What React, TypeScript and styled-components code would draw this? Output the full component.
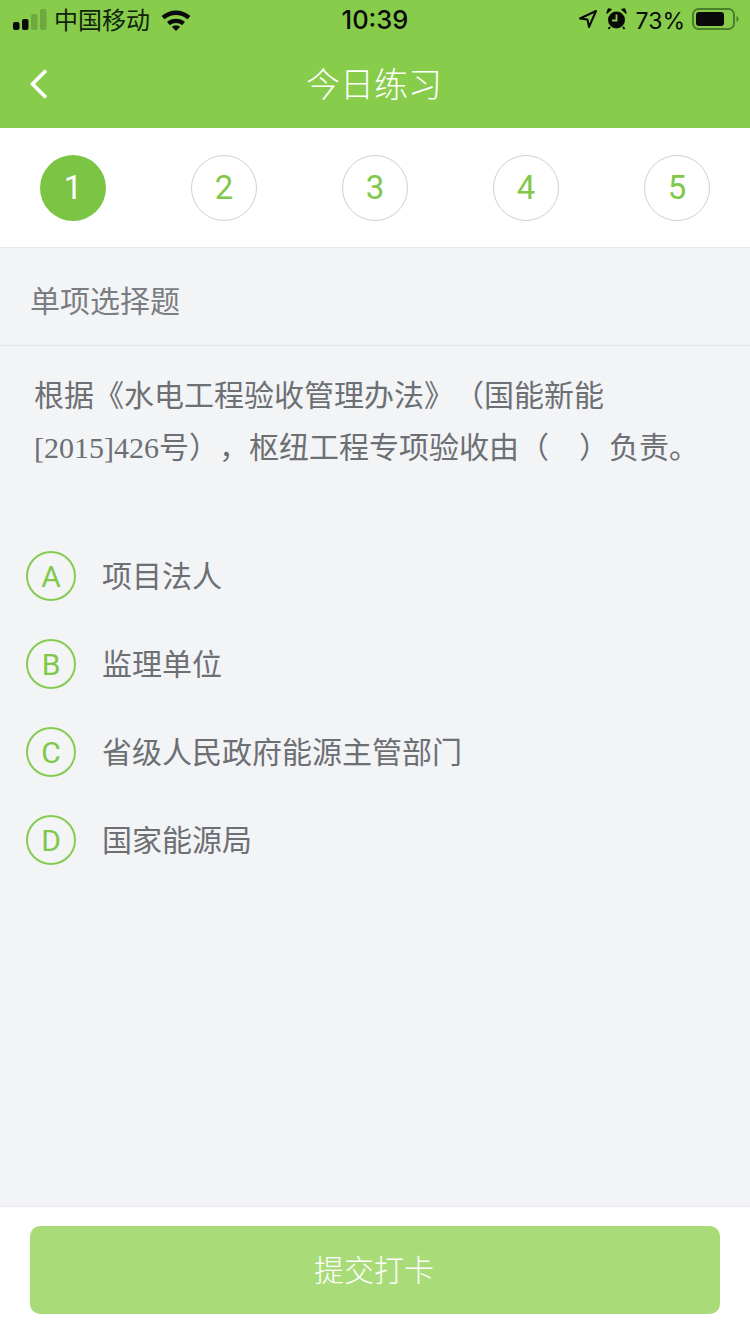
import React from "react";
import styled, { createGlobalStyle } from "styled-components";

const cjk = `"Noto Sans CJK SC", "Noto Sans", sans-serif`;

const Global = createGlobalStyle`
  html, body { margin: 0; padding: 0; }
  body { background: #f3f4f6; font-family: ${cjk}; text-spacing-trim: space-all; }
  * { box-sizing: border-box; }
`;

const Page = styled.div`
  width: 750px;
  height: 1334px;
  display: flex;
  flex-direction: column;
  background: #f3f4f6;
  overflow: hidden;
`;

const Header = styled.header`
  height: 128px;
  background: #87cc4b;
  display: flex;
  flex-direction: column;
`;

const StatusBar = styled.div`
  height: 40px;
  padding: 0 11px 0 13px;
  display: grid;
  grid-template-columns: 1fr auto 1fr;
  align-items: center;
  color: #0a0a0a;
`;

const StatusLeft = styled.div`
  display: flex;
  align-items: center;
`;

const StatusRight = styled.div`
  display: flex;
  align-items: center;
  justify-content: flex-end;
`;

const Carrier = styled.span`
  font-size: 24px;
  line-height: 36px;
  margin-left: 7px;
  padding-bottom: 3px;
  color: #10240a;
`;

const Time = styled.span`
  font-family: Inter, "Liberation Sans", sans-serif;
  font-size: 25.5px;
  font-weight: 500;
  line-height: 40px;
  margin-right: 2px;
`;

const Percent = styled.span`
  font-family: Inter, "Liberation Sans", sans-serif;
  font-size: 23px;
  font-weight: 400;
  line-height: 36px;
  padding-top: 2px;
  margin: 0 7px 0 9px;
`;

const WifiIcon = styled.svg`
  margin-left: 11px;
`;

const LocationIcon = styled.svg`
  margin-bottom: 2px;
`;

const AlarmIcon = styled.svg`
  margin: 0 0 2px 8px;
`;

const BatteryIcon = styled.svg`
  margin-bottom: 2px;
`;

const Nav = styled.div`
  flex: 1;
  position: relative;
  display: flex;
  align-items: center;
  justify-content: center;
`;

const BackIcon = styled.svg`
  position: absolute;
  left: 29px;
  top: 28px;
`;

const Title = styled.h1`
  margin: 0 2px 0 0;
  font-size: 34px;
  font-weight: 300;
  color: #fff;
  line-height: 88px;
  position: relative;
  top: -1px;
`;

const Steps = styled.nav`
  height: 120px;
  padding: 0 40px 0 40px;
  background: #fff;
  border-bottom: 1px solid #e6e7ea;
  display: flex;
  align-items: center;
  justify-content: space-between;
`;

const Step = styled.div<{ $active?: boolean }>`
  width: 66px;
  height: 66px;
  border-radius: 50%;
  display: flex;
  align-items: center;
  justify-content: center;
  font-family: Roboto, "Liberation Sans", sans-serif;
  font-size: 33px;
  font-weight: 400;
  color: ${(p) => (p.$active ? "#fff" : "#7fc84a")};
  background: ${(p) => (p.$active ? "#7cc444" : "#fff")};
  border: ${(p) => (p.$active ? "none" : "1px solid #cfd0d2")};
`;

const SectionTitle = styled.div`
  height: 98px;
  padding: 4px 0 0 30px;
  border-bottom: 1px solid #e6e7ea;
  display: flex;
  align-items: center;
  font-size: 30px;
  font-weight: 400;
  color: #7a7d81;
  line-height: 1;
`;

const Question = styled.p`
  margin: 0;
  padding: 21px 20px 0 34px;
  font-size: 30px;
  line-height: 52px;
  font-weight: 400;
  color: #6c6f73;
`;

const Latin = styled.span`
  font-family: "Liberation Serif", serif;
  font-weight: 400;
`;

const Options = styled.ul`
  list-style: none;
  margin: 57px 0 0;
  padding: 0 0 0 26px;
  display: flex;
  flex-direction: column;
`;

const Option = styled.li`
  height: 88px;
  display: flex;
  align-items: center;
  gap: 26px;
`;

const Letter = styled.span`
  width: 50px;
  height: 50px;
  border: 2px solid #85cc4f;
  border-radius: 50%;
  display: flex;
  align-items: center;
  justify-content: center;
  font-family: Roboto, "Liberation Sans", sans-serif;
  font-size: 30px;
  font-weight: 400;
  color: #7fc84a;
  position: relative;
  top: 1px;
`;

const OptionText = styled.span`
  font-size: 30px;
  font-weight: 400;
  line-height: 1;
  color: #6c6f73;
  position: relative;
  top: -1px;
`;

const Spacer = styled.div`
  flex: 1;
`;

const Footer = styled.footer`
  height: 128px;
  background: #fff;
  border-top: 1px solid #e9eaee;
  padding: 19px 30px 0;
`;

const Submit = styled.button`
  width: 690px;
  height: 88px;
  border: 0;
  border-radius: 10px;
  background: #a9dc79;
  color: #fff;
  font-family: ${cjk};
  font-size: 30px;
  font-weight: 300;
  padding: 0 2px 4px 0;
`;

const options = [
  ["A", "项目法人"],
  ["B", "监理单位"],
  ["C", "省级人民政府能源主管部门"],
  ["D", "国家能源局"],
];

export default function App() {
  return (
    <Page>
      <Global />
      <Header>
        <StatusBar>
          <StatusLeft>
            <svg width="34" height="24" viewBox="0 0 34 24">
              <rect x="0" y="14" width="6.500" height="8" rx="2" fill="#0a0a0a" />
              <rect x="9" y="11" width="6.500" height="11" rx="2" fill="#0a0a0a" />
              <rect x="18" y="6" width="6.500" height="16" rx="2" fill="#6fa83f" />
              <rect x="27" y="1" width="6.500" height="21" rx="2" fill="#6fa83f" />
            </svg>
            <Carrier>中国移动</Carrier>
            <WifiIcon width="30" height="22" viewBox="0 0 30 22">
              <path d="M0.500 7C8.800-.5 21.200-.5 29.500 7l-3 3.300C19.800 4.500 10.200 4.500 3.500 10.300z" fill="#0a0a0a" />
              <path d="M6 13C11 8.600 19 8.600 24 13l-3 3.200c-3.400-2.800-8.600-2.800-12 0z" fill="#0a0a0a" />
              <path d="M10.800 17.800c2.400-1.800 6-1.800 8.400 0L15 22z" fill="#0a0a0a" />
            </WifiIcon>
          </StatusLeft>
          <Time>10:39</Time>
          <StatusRight>
            <LocationIcon width="20" height="20" viewBox="0 0 20 20">
              <path d="M18 2 2 9.500l7.500 1 1.500 7.500z" fill="none" stroke="#0a0a0a" strokeWidth="2" strokeLinejoin="round" />
            </LocationIcon>
            <AlarmIcon width="21" height="22" viewBox="0 0 21 22">
              <circle cx="10.500" cy="12" r="8.500" fill="#0a0a0a" />
              <path d="M10.500 6.500V12.500H6" fill="none" stroke="#87cc4b" strokeWidth="1.800" />
              <path d="M1 5 5 1.500 2.500 1zM20 5 16 1.500 18.500 1z" fill="#0a0a0a" stroke="#0a0a0a" strokeWidth="1.500" strokeLinejoin="round" />
              <path d="M4 19 2.500 21M17 19l1.500 2" stroke="#0a0a0a" strokeWidth="2" />
            </AlarmIcon>
            <Percent>73%</Percent>
            <BatteryIcon width="47" height="24" viewBox="0 0 47 24">
              <rect x="1" y="2" width="41" height="20" rx="5.500" fill="none" stroke="#4c7f2a" strokeWidth="2" />
              <rect x="4" y="5" width="28" height="14" rx="3" fill="#0a0a0a" />
              <path d="M44.500 9c1.500.5 2 1.500 2 3s-.5 2.500-2 3z" fill="#4c7f2a" />
            </BatteryIcon>
          </StatusRight>
        </StatusBar>
        <Nav>
          <BackIcon width="20" height="32" viewBox="0 0 20 32">
            <path d="M17 2.500 3.500 16 17 29.500" fill="none" stroke="#fff" strokeWidth="3.600" />
          </BackIcon>
          <Title>今日练习</Title>
        </Nav>
      </Header>
      <Steps>
        {[1, 2, 3, 4, 5].map((n) => (
          <Step key={n} $active={n === 1}>
            {n}
          </Step>
        ))}
      </Steps>
      <SectionTitle>单项选择题</SectionTitle>
      <Question>
        根据《水电工程验收管理办法》（国能新能
        <br />
        <Latin>[2015]426</Latin>号），枢纽工程专项验收由（　）负责。
      </Question>
      <Options>
        {options.map(([k, t]) => (
          <Option key={k}>
            <Letter>{k}</Letter>
            <OptionText>{t}</OptionText>
          </Option>
        ))}
      </Options>
      <Spacer />
      <Footer>
        <Submit>提交打卡</Submit>
      </Footer>
    </Page>
  );
}
